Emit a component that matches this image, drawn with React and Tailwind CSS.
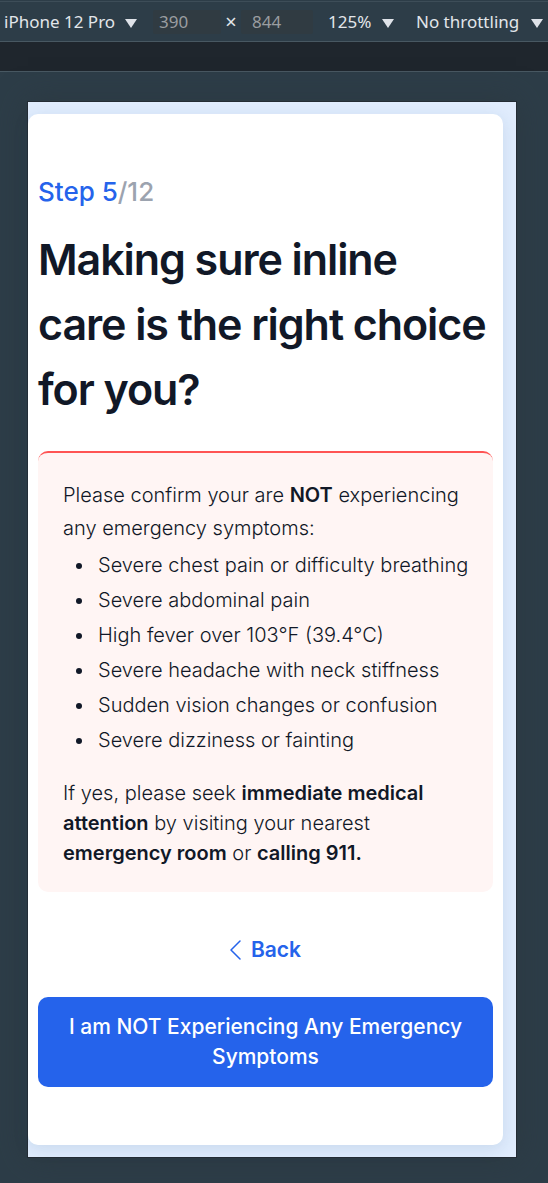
import { useState } from "react";

const symptoms = [
  "Severe chest pain or difficulty breathing",
  "Severe abdominal pain",
  "High fever over 103°F (39.4°C)",
  "Severe headache with neck stiffness",
  "Sudden vision changes or confusion",
  "Severe dizziness or fainting",
];

function Arrow() {
  return (
    <svg viewBox="0 0 12 9" className="pointer-events-none mt-1 h-[9px] w-3 shrink-0 fill-[#dfe3e9]" aria-hidden="true">
      <path d="M0 0H12L6 9Z" />
    </svg>
  );
}

function ToolbarSelect({ label, options, className }) {
  return (
    <div className="flex shrink-0 items-center gap-2">
      <select aria-label={label} className={`appearance-none bg-transparent outline-none ${className}`}>
        {options.map((option) => (
          <option key={option}>{option}</option>
        ))}
      </select>
      <Arrow />
    </div>
  );
}

function SizeInput({ label, value, onChange, className }) {
  return (
    <input
      aria-label={label}
      value={value}
      onChange={(event) => onChange(event.target.value)}
      className={`h-6 rounded-xs bg-[#303b42] text-[#9a9da0] outline-none ${className}`}
    />
  );
}

function DeviceToolbar() {
  const [width, setWidth] = useState("390");
  const [height, setHeight] = useState("844");
  return (
    <header>
      <div className="h-[2px] border-b border-[#3d4d58] bg-[#2d3d48]" />
      <div className="flex h-10 items-center overflow-hidden border-b border-[#485862] bg-[#2d3d48] pl-1 font-['Noto_Sans',sans-serif] text-[17px] text-[#e2e6ea]">
        <ToolbarSelect label="Device" options={["iPhone 12 Pro"]} className="w-[113px]" />
        <div className="ml-4 flex shrink-0 items-center">
          <SizeInput label="Width" value={width} onChange={setWidth} className="w-[68px] pl-[6px]" />
          <span className="w-[20px] text-center text-[20px]">×</span>
          <SizeInput label="Height" value={height} onChange={setHeight} className="w-[72px] pl-[11px]" />
        </div>
        <div className="ml-[15px] flex shrink-0 gap-[22px]">
          <ToolbarSelect label="Zoom" options={["125%"]} className="w-[46px]" />
          <ToolbarSelect label="Throttling" options={["No throttling"]} className="w-[107px]" />
        </div>
      </div>
      <div className="h-[30px] border-b border-[#485862] bg-[#1f262d]" />
    </header>
  );
}

export default function App() {
  return (
    <div className="min-h-screen bg-[#2d3d48]">
      <DeviceToolbar />
      <div className="pt-[30px] pr-8 pb-[26px] pl-7">
        <div className="bg-[#e0ecfd] pt-3 pr-[13px] pb-3 shadow-[0_0_0_1px_#242c34,0_0_30px_rgba(44,54,60,0.6)]">
          <main className="flex flex-col rounded-[10px] bg-white px-[10px] pt-[60px] pb-[58px] font-['Inter',sans-serif] text-[#111827] shadow-[0_4px_16px_rgba(30,80,120,0.12)]">
            <p className="text-[26px] leading-9 font-medium text-[#9ca3af]">
              <span className="text-[#2563eb]">Step 5</span>/12
            </p>
            <h1 className="mt-[17px] text-[43px] leading-[65px] font-semibold tracking-tight">
              Making sure inline care is the right choice for you?
            </h1>
            <section className="mt-[29px] rounded-[10px] border-t-2 border-[#ff5454] bg-[#fff5f4] pt-[26px] pr-4 pb-6 pl-[25px] text-[20px] font-light">
              <p className="leading-[33px]">
                Please confirm your are <strong className="font-semibold">NOT</strong> experiencing any emergency
                symptoms:
              </p>
              <ul className="mt-[3px] pl-[13px] leading-[35px]">
                {symptoms.map((symptom) => (
                  <li
                    key={symptom}
                    className="flex items-center gap-4 before:size-[6px] before:shrink-0 before:rounded-full before:bg-[#111827] before:content-['']"
                  >
                    {symptom}
                  </li>
                ))}
              </ul>
              <p className="mt-5 leading-[30px]">
                If yes, please seek <strong className="font-semibold">immediate medical attention</strong> by visiting
                your nearest <strong className="font-semibold">emergency room</strong> or{" "}
                <strong className="font-semibold">calling 911.</strong>
              </p>
            </section>
            <button type="button" className="mt-10 flex h-9 items-center gap-[10px] self-center text-[21px] font-semibold text-[#2563eb]">
              <svg viewBox="0 0 11 20" className="h-5 w-[11px] fill-none stroke-[#2563eb]" strokeWidth="1.5" strokeLinecap="round" strokeLinejoin="round" aria-hidden="true">
                <path d="M10 1 1 10l9 9" />
              </svg>
              Back
            </button>
            <button type="button" className="mt-[29px] rounded-[10px] bg-[#2563eb] px-5 py-[15px] text-[21px] leading-[30px] font-medium text-white">
              I am NOT Experiencing Any Emergency Symptoms
            </button>
          </main>
        </div>
      </div>
    </div>
  );
}
